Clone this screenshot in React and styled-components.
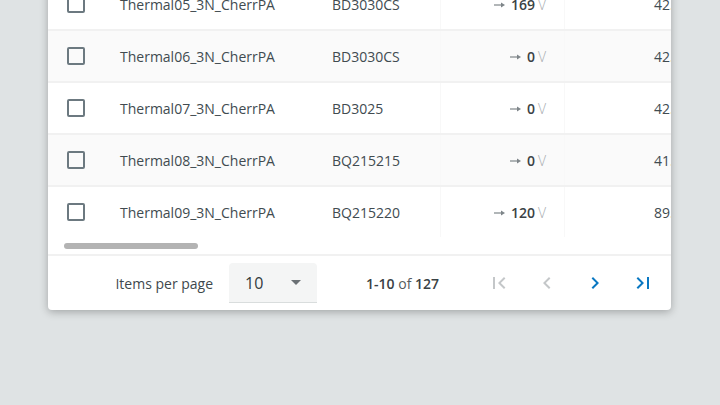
import React from 'react';
import styled, { createGlobalStyle } from 'styled-components';

const rows = [
  { name: 'Thermal05_3N_CherrPA', part: 'BD3030CS', volt: '169', next: '42.6 °C' },
  { name: 'Thermal06_3N_CherrPA', part: 'BD3030CS', volt: '0', next: '42.1 °C' },
  { name: 'Thermal07_3N_CherrPA', part: 'BD3025', volt: '0', next: '42.9 °C' },
  { name: 'Thermal08_3N_CherrPA', part: 'BQ215215', volt: '0', next: '41.7 °C' },
  { name: 'Thermal09_3N_CherrPA', part: 'BQ215220', volt: '120', next: '89.3 °C' },
];

const FirstIcon = () => (
  <svg width="24" height="24" viewBox="0 0 24 24">
    <path d="M18.41 16.59L13.82 12l4.59-4.59L17 6l-6 6 6 6zM6 6h2v12H6z" fill="currentColor" />
  </svg>
);
const PrevIcon = () => (
  <svg width="24" height="24" viewBox="0 0 24 24">
    <path d="M15.41 7.41L14 6l-6 6 6 6 1.41-1.41L10.83 12z" fill="currentColor" />
  </svg>
);
const NextIcon = () => (
  <svg width="24" height="24" viewBox="0 0 24 24">
    <path d="M10 6L8.59 7.41 13.17 12l-4.58 4.59L10 18l6-6z" fill="currentColor" />
  </svg>
);
const LastIcon = () => (
  <svg width="24" height="24" viewBox="0 0 24 24">
    <path d="M5.59 7.41L10.18 12l-4.59 4.59L7 18l6-6-6-6zM16 6h2v12h-2z" fill="currentColor" />
  </svg>
);

// small trend arrow in front of the voltage
const TrendArrow = () => (
  <svg width="11" height="6" viewBox="0 0 11 6">
    <path d="M0 3h8" stroke="currentColor" strokeWidth="1.2" />
    <path d="M7 0.6L11 3 7 5.4z" fill="currentColor" />
  </svg>
);

export default function App() {
  return (
    <Page>
      <GlobalStyle />
      <Card>
        <Body>
          {rows.map((r, i) => (
            <Row key={r.name} striped={i % 2 === 1}>
              <CheckCell>
                <Checkbox />
              </CheckCell>
              <NameCell>{r.name}</NameCell>
              <PartCell>{r.part}</PartCell>
              <VoltCell>
                <Arrow>
                  <TrendArrow />
                </Arrow>
                <Value>{r.volt}</Value>
                <Unit>V</Unit>
              </VoltCell>
              <NextCell>{r.next}</NextCell>
            </Row>
          ))}
        </Body>
        <ScrollTrack>
          <ScrollThumb />
        </ScrollTrack>
        <Footer>
          <PerPage>Items per page</PerPage>
          <Select>
            <span>10</span>
            <Caret />
          </Select>
          <Range>
            <b>1-10</b> of <b>127</b>
          </Range>
          <Pager>
            <PageButton disabled>
              <FirstIcon />
            </PageButton>
            <PageButton disabled>
              <PrevIcon />
            </PageButton>
            <PageButton>
              <NextIcon />
            </PageButton>
            <PageButton>
              <LastIcon />
            </PageButton>
          </Pager>
        </Footer>
      </Card>
    </Page>
  );
}

const GlobalStyle = createGlobalStyle`
  body {
    margin: 0;
    background: #dfe3e4;
    font-family: "Open Sans", "Liberation Sans", sans-serif;
  }
`;

const Page = styled.div`
  width: 720px;
  height: 405px;
  overflow: hidden;
  padding: 0 49px 0 48px;
  box-sizing: border-box;
`;

const Card = styled.div`
  width: 623px;
  margin-top: -23px;
  background: #fff;
  border-radius: 4px;
  box-shadow: 0 2px 8px rgba(0, 0, 0, 0.28);
  overflow: hidden;
`;

const Body = styled.div`
  display: flex;
  flex-direction: column;
`;

const Row = styled.div`
  display: grid;
  grid-template-columns: 56px 212px 124px 124px 200px;
  height: 52px;
  box-sizing: border-box;
  border-top: 2px solid #f1f1f1;
  background: ${(p) => (p.striped ? '#fafafa' : '#fff')};
  font-size: 14px;
  color: #414b50;
`;

const Cell = styled.div`
  display: flex;
  align-items: center;
  white-space: nowrap;
`;

const CheckCell = styled(Cell)`
  padding-left: 19px;
`;

const Checkbox = styled.div`
  width: 18px;
  height: 18px;
  box-sizing: border-box;
  border: 2px solid #6c7980;
  border-radius: 2px;
`;

const NameCell = styled(Cell)`
  padding-left: 16px;
`;

const PartCell = styled(Cell)`
  padding-left: 16px;
`;

const VoltCell = styled(Cell)`
  justify-content: flex-end;
  padding-right: 18px;
  border-left: 1px solid #f8f8f8;
`;

const Arrow = styled.span`
  display: flex;
  color: #7e8589;
  margin: 2px 6px 0 0;
`;

const Value = styled.span`
  font-weight: 600;
  color: #3a4245;
`;

const Unit = styled.span`
  color: #a9aeb1;
  margin-left: 3px;
  font-weight: 300;
`;

const NextCell = styled(Cell)`
  padding-left: 89px;
  border-left: 1px solid #f8f8f8;
`;

const ScrollTrack = styled.div`
  height: 17px;
  padding: 6px 0 0 16px;
  box-sizing: border-box;
`;

const ScrollThumb = styled.div`
  width: 134px;
  height: 6px;
  border-radius: 3px;
  background: #b3b3b3;
`;

const Footer = styled.div`
  display: flex;
  align-items: center;
  justify-content: flex-end;
  height: 56px;
  box-sizing: border-box;
  border-top: 2px solid #f1f1f1;
  padding-right: 4px;
  font-size: 14px;
  color: #3e484d;
`;

const PerPage = styled.span`
  margin-right: 16px;
`;

const Select = styled.div`
  display: flex;
  align-items: center;
  justify-content: space-between;
  width: 88px;
  height: 40px;
  box-sizing: border-box;
  padding: 0 16px;
  background: #f4f5f5;
  border-radius: 4px 4px 0 0;
  border-bottom: 1px solid #d9dddd;
  font-size: 16px;
  color: #333a3d;
`;

const Caret = styled.div`
  width: 0;
  height: 0;
  border-left: 5px solid transparent;
  border-right: 5px solid transparent;
  border-top: 5px solid #6b7175;
`;

const Range = styled.span`
  margin-left: 49px;
  color: #555c60;

  b {
    font-weight: 600;
    color: #3a4245;
  }
`;

const Pager = styled.div`
  display: flex;
  margin-left: 36px;
`;

const PageButton = styled.button`
  width: 48px;
  height: 48px;
  display: flex;
  align-items: center;
  justify-content: center;
  border: none;
  padding: 0;
  background: none;
  color: ${(p) => (p.disabled ? '#c4c7c9' : '#0a78c2')};
`;
